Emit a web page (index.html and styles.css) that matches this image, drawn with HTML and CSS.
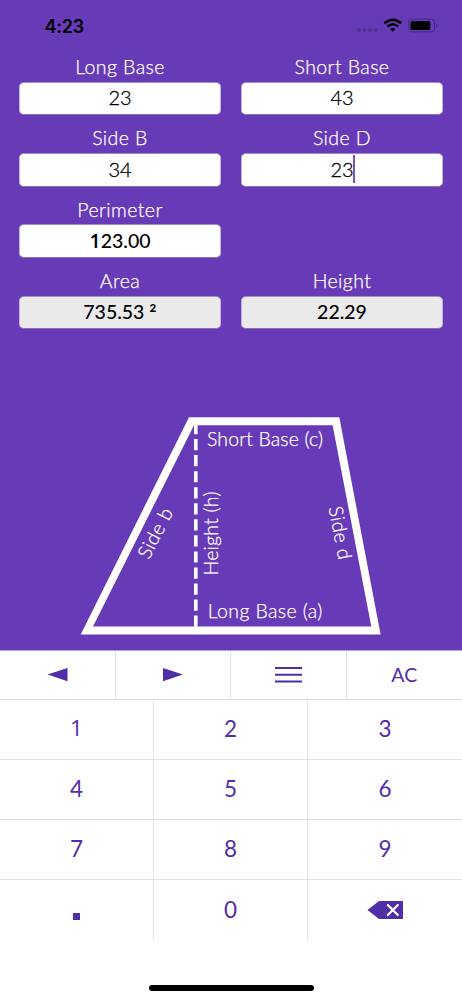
FILE: index.html
```html
<!DOCTYPE html>
<html lang="en">
<head>
<meta charset="utf-8">
<title>Trapezoid Calculator</title>
<link rel="stylesheet" href="styles.css">
</head>
<body>
<main class="screen">
  <header class="status">
    <span class="time">4:23</span>
    <svg class="indicators" width="84" height="18" viewBox="0 0 84 18">
      <g fill="#533090"><circle cx="5" cy="13" r="2"/><circle cx="10.6" cy="13" r="2"/><circle cx="16.2" cy="13" r="2"/><circle cx="21.8" cy="13" r="2"/></g>
      <g fill="none" stroke="#000" stroke-width="2.5"><path d="M30.4 6.2Q38.8-.8 47.2 6.2"/><path d="M33.4 9.5Q38.8 5 44.2 9.5"/></g>
      <path d="M36.1 12.1Q38.8 10 41.5 12.1L38.8 14.7Z"/>
      <rect x="54.6" y="2.1" width="26" height="12.8" rx="3.8" fill="none" stroke="#4a2b87" stroke-width="1.1"/>
      <rect x="56.5" y="4" width="19.8" height="9.1" rx="1.8"/>
      <path d="M82 6.4Q83.8 7.1 83.8 8.5T82 10.6Z" fill="#4a2b87"/>
    </svg>
  </header>

  <section class="fields">
    <div class="field"><div class="label">Long Base</div><div class="box">23</div></div>
    <div class="field"><div class="label">Short Base</div><div class="box">43</div></div>
    <div class="field"><div class="label">Side B</div><div class="box">34</div></div>
    <div class="field"><div class="label">Side D</div><div class="box">23<span class="caret"></span></div></div>
    <div class="field first"><div class="label">Perimeter</div><div class="box strong"><span><span class="one">1</span>23.00</span></div></div>
    <div class="field first"><div class="label">Area</div><div class="box strong result">735.53 <span class="square">²</span></div></div>
    <div class="field"><div class="label">Height</div><div class="box strong result">22.29</div></div>
  </section>

  <svg class="diagram" viewBox="0 400 462 250">
    <path fill="#fff" fill-rule="evenodd" d="M189 417.3H339.3L380.6 634.5H80.7ZM194 425.3L93 626.4H371.3L332.6 425.3Z"/>
    <path d="M195.8 423V628" stroke="#fff" stroke-width="3.6" stroke-dasharray="11.2 4.85"/>
    <g class="diagram-text">
      <text x="207" y="445.5" textLength="116">Short Base (c)</text>
      <text x="207.7" y="618.3" textLength="114.5">Long Base (a)</text>
      <text transform="translate(217.5 575.5) rotate(-90)" textLength="84">Height (h)</text>
      <text transform="translate(149 560.3) rotate(-63)" textLength="54">Side b</text>
      <text transform="translate(328.6 507.6) rotate(79.5)" textLength="53.5">Side d</text>
    </g>
  </svg>

  <section class="keyboard">
    <div class="toolbar">
      <div class="tool"><svg width="22" height="16" viewBox="0 0 22 16"><path d="M1.5 7.5 21.5 1V14.2Z"/></svg></div>
      <div class="tool"><svg width="22" height="16" viewBox="0 0 22 16"><path d="M21 7.5 1 1V14.2Z"/></svg></div>
      <div class="tool"><svg width="30" height="18" viewBox="0 0 30 18"><path d="M2 1h27v2H2zM2 7.7h27v2H2zM2 14.5h27v2H2z"/></svg></div>
      <div class="tool ac">AC</div>
    </div>
    <div class="keys">
      <div class="key"><span class="one">1</span></div><div class="key">2</div><div class="key">3</div>
      <div class="key">4</div><div class="key">5</div><div class="key">6</div>
      <div class="key">7</div><div class="key">8</div><div class="key">9</div>
      <div class="key symbol"><span class="point"></span></div><div class="key">0</div>
      <div class="key symbol"><svg width="36" height="18" viewBox="0 0 36 18"><path d="M.5 9 12 0H36V18H12Z"/><path d="M20.8 4 30.8 14M30.8 4 20.8 14" stroke="#fff" stroke-width="2.2" stroke-linecap="round"/></svg></div>
    </div>
    <div class="home"></div>
  </section>
</main>
</body>
</html>
```

FILE: styles.css
```css
* { box-sizing: border-box; }
body { margin: 0; font-family: Lato, "Liberation Sans", sans-serif; }
svg { display: block; }
.screen { width: 462px; height: 1000px; display: flex; flex-direction: column; background: #673ab7; overflow: hidden; }
.status { height: 52px; flex: none; display: flex; justify-content: space-between; padding: 17px 24px 0 44.5px; }
.time { font: 600 18px/19px Inter, sans-serif; letter-spacing: -.2px; }
.fields { height: 348px; flex: none; display: grid; grid-template-columns: 202px 202px; grid-auto-rows: 71.4px; column-gap: 20px; align-content: start; padding-left: 19px; }
.first { grid-column: 1; }
.label { height: 29.7px; line-height: 30px; text-align: center; color: #fff; font-size: 19.5px; font-weight: 300; letter-spacing: .42px; -webkit-text-stroke: .25px #fff; }
.box { height: 33.6px; display: flex; align-items: center; justify-content: center; background: #fff; border: 1px solid; border-color: #a08bc5 #c0b3d7 #8a73b0; border-radius: 5px; color: #000; font-size: 20px; font-weight: 300; padding-bottom: 2px; -webkit-text-stroke: .3px #000; }
.strong { font-size: 19.5px; font-weight: 500; white-space: pre; -webkit-text-stroke: 0; }
.result { background: #eaeaea; }
.one { font-family: "Open Sans", sans-serif; line-height: 1; }
.strong .one { font-weight: 600; }
.square { font-size: 22px; line-height: 20px; margin-top: 4px; }
.caret { width: 2px; height: 28px; margin: 1px -1px 0 -1px; background: #7552bd; }
.diagram { width: 462px; height: 250px; flex: none; }
.diagram-text { font-size: 19.5px; font-weight: 300; fill: #fff; stroke: #fff; stroke-width: .25px; }
.keyboard { flex: 1; display: flex; flex-direction: column; background: #fff; color: #512da8; border-top: 1px solid #b5a0dc; }
.toolbar { height: 48.5px; display: grid; grid-template-columns: repeat(4, 1fr); border-bottom: 1px solid #dedede; }
.tool, .key { display: flex; align-items: center; justify-content: center; }
.tool:not(:last-child) { border-right: 1px solid #e2e2e2; }
.tool svg, .key svg { fill: #512da8; }
.ac { font-size: 19.5px; }
.keys { display: grid; grid-template-columns: repeat(3, 1fr); grid-auto-rows: 60.2px; }
.key { font-size: 22.5px; padding-bottom: 2px; border-bottom: 1px solid #e2e2e2; }
.symbol { padding-bottom: 0; }
.key:not(:nth-child(3n)) { border-right: 1.5px solid #e6e6e6; }
.key:nth-child(n+10) { border-bottom: 0; }
.point { width: 7px; height: 7px; margin-top: 13px; background: #512da8; }
.home { width: 165px; height: 6px; margin: 44.5px auto 0; border-radius: 3px; background: #000; }
```
